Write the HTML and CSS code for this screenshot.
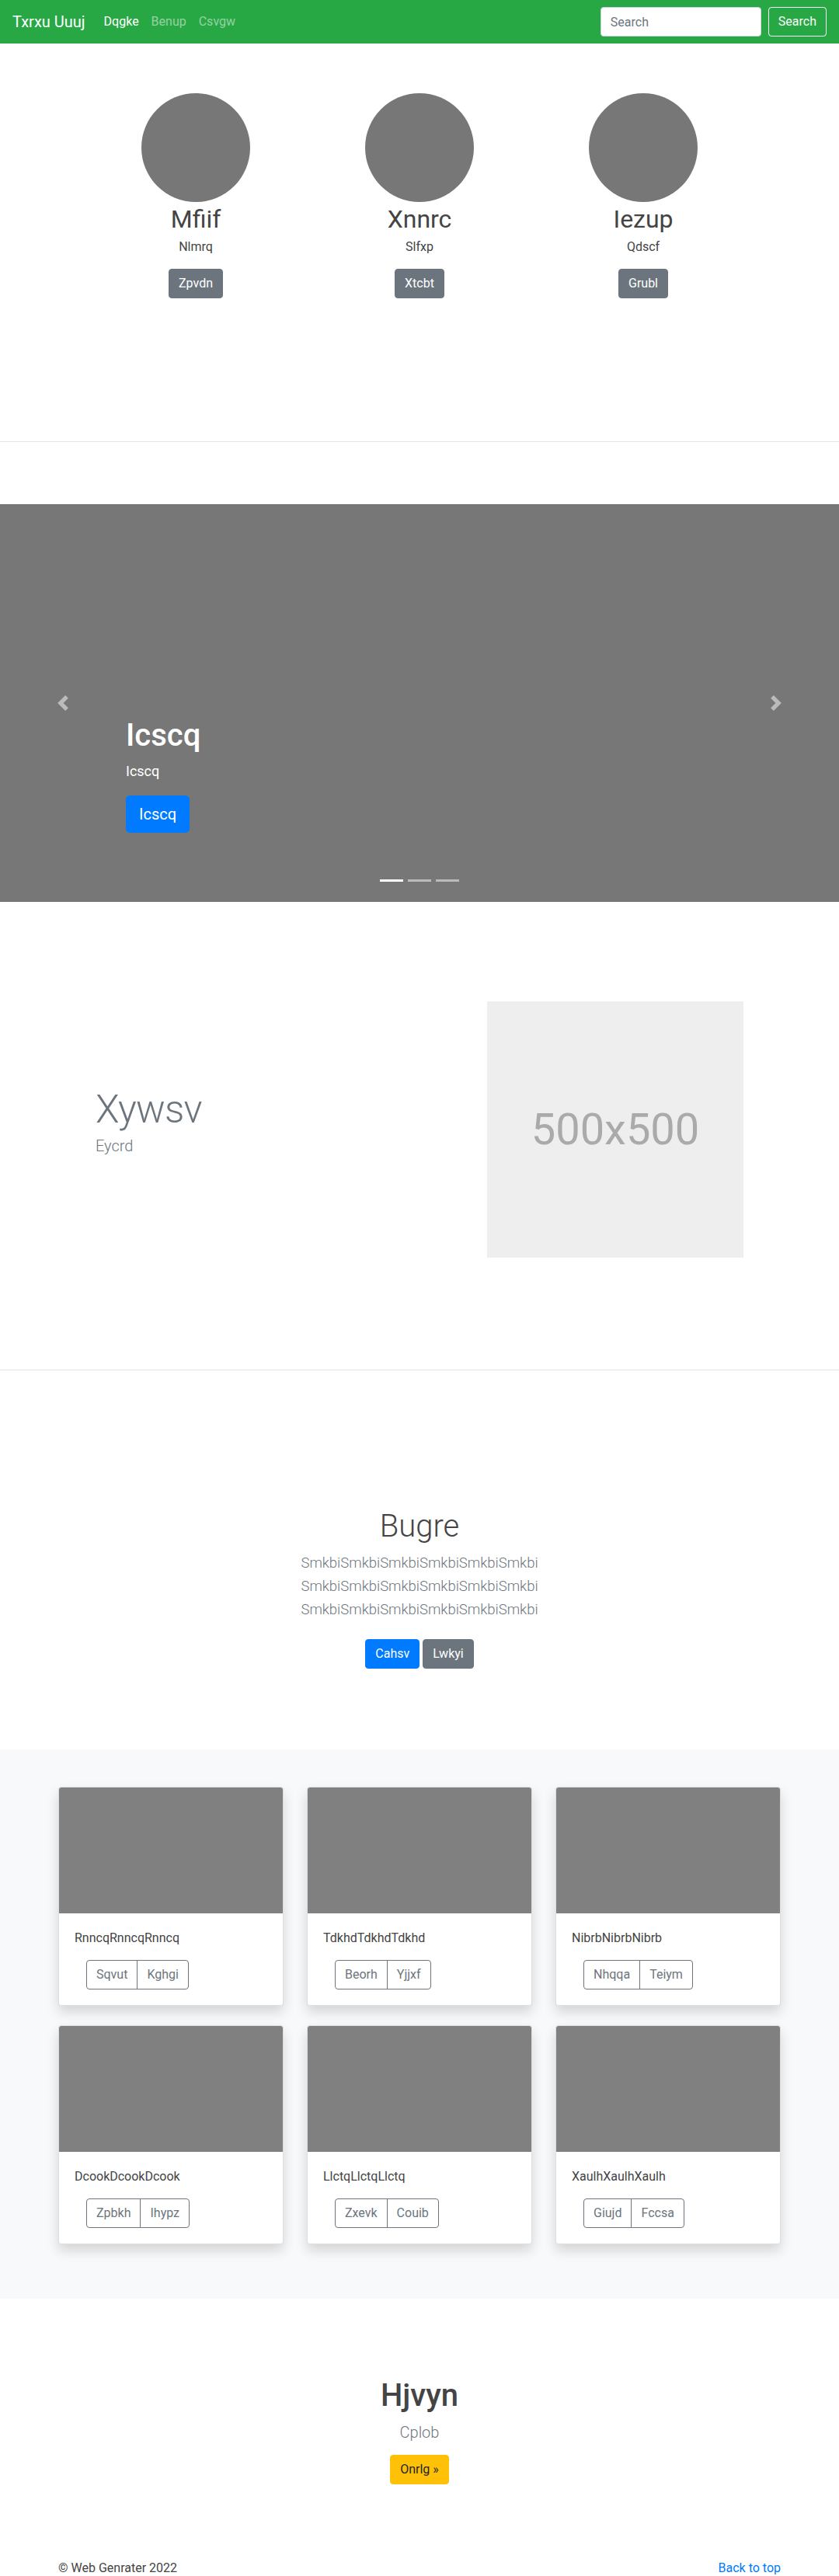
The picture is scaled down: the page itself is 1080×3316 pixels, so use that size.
FILE: index.html
```html
<!DOCTYPE html>
<html lang="en">
<head>
<meta charset="utf-8">
<title>Txrxu Uuuj</title>
<link rel="stylesheet" href="styles.css">
</head>
<body>
<nav class="navbar">
  <a class="brand" href="#">Txrxu Uuuj</a>
  <ul class="nav-links">
    <li><a class="nav-link active" href="#">Dqgke</a></li>
    <li><a class="nav-link" href="#">Benup</a></li>
    <li><a class="nav-link" href="#">Csvgw</a></li>
  </ul>
  <form class="search">
    <input class="search-input" type="text" placeholder="Search">
    <button class="btn btn-outline-light" type="button">Search</button>
  </form>
</nav>

<section class="team">
  <div class="narrow row3">
    <div class="member">
      <div class="avatar"></div>
      <h2 class="member-name">Mfiif</h2>
      <p class="member-role">Nlmrq</p>
      <a class="btn btn-secondary" href="#">Zpvdn</a>
    </div>
    <div class="member">
      <div class="avatar"></div>
      <h2 class="member-name">Xnnrc</h2>
      <p class="member-role">Slfxp</p>
      <a class="btn btn-secondary" href="#">Xtcbt</a>
    </div>
    <div class="member">
      <div class="avatar"></div>
      <h2 class="member-name">Iezup</h2>
      <p class="member-role">Qdscf</p>
      <a class="btn btn-secondary" href="#">Grubl</a>
    </div>
  </div>
</section>

<hr class="divider divider-top">

<div class="carousel">
  <a class="carousel-control prev" href="#">
    <svg width="20" height="20" viewBox="0 0 8 8"><path fill="#fff" d="M5.25 0l-4 4 4 4 1.5-1.5L4.25 4l2.5-2.5L5.25 0z"/></svg>
  </a>
  <div class="carousel-caption">
    <h1 class="caption-title">Icscq</h1>
    <p class="caption-text">Icscq</p>
    <a class="btn btn-lg btn-primary" href="#">Icscq</a>
  </div>
  <a class="carousel-control next" href="#">
    <svg width="20" height="20" viewBox="0 0 8 8"><path fill="#fff" d="M2.75 0l-1.5 1.5L3.75 4l-2.5 2.5L2.75 8l4-4-4-4z"/></svg>
  </a>
  <ol class="indicators">
    <li class="active"></li>
    <li></li>
    <li></li>
  </ol>
</div>

<section class="featurette">
  <div class="narrow feat-row">
    <div class="feat-text">
      <h2 class="feat-heading">Xywsv</h2>
      <p class="lead muted">Eycrd</p>
    </div>
    <div class="feat-media">
      <div class="placeholder">500x500</div>
    </div>
  </div>
</section>

<hr class="divider divider-mid">

<section class="jumbo">
  <h1 class="jumbo-heading">Bugre</h1>
  <p class="lead muted jumbo-lead">SmkbiSmkbiSmkbiSmkbiSmkbiSmkbi SmkbiSmkbiSmkbiSmkbiSmkbiSmkbi SmkbiSmkbiSmkbiSmkbiSmkbiSmkbi</p>
  <p class="jumbo-actions">
    <a class="btn btn-primary" href="#">Cahsv</a>
    <a class="btn btn-secondary" href="#">Lwkyi</a>
  </p>
</section>

<section class="album">
  <div class="container card-grid">
    <div class="card">
      <div class="card-img"></div>
      <div class="card-body">
        <p class="card-text">RnncqRnncqRnncq</p>
        <div class="btn-group"><button class="btn btn-outline-secondary">Sqvut</button><button class="btn btn-outline-secondary">Kghgi</button></div>
      </div>
    </div>
    <div class="card">
      <div class="card-img"></div>
      <div class="card-body">
        <p class="card-text">TdkhdTdkhdTdkhd</p>
        <div class="btn-group"><button class="btn btn-outline-secondary">Beorh</button><button class="btn btn-outline-secondary">Yjjxf</button></div>
      </div>
    </div>
    <div class="card">
      <div class="card-img"></div>
      <div class="card-body">
        <p class="card-text">NibrbNibrbNibrb</p>
        <div class="btn-group"><button class="btn btn-outline-secondary">Nhqqa</button><button class="btn btn-outline-secondary">Teiym</button></div>
      </div>
    </div>
    <div class="card">
      <div class="card-img"></div>
      <div class="card-body">
        <p class="card-text">DcookDcookDcook</p>
        <div class="btn-group"><button class="btn btn-outline-secondary">Zpbkh</button><button class="btn btn-outline-secondary">Ihypz</button></div>
      </div>
    </div>
    <div class="card">
      <div class="card-img"></div>
      <div class="card-body">
        <p class="card-text">LlctqLlctqLlctq</p>
        <div class="btn-group"><button class="btn btn-outline-secondary">Zxevk</button><button class="btn btn-outline-secondary">Couib</button></div>
      </div>
    </div>
    <div class="card">
      <div class="card-img"></div>
      <div class="card-body">
        <p class="card-text">XaulhXaulhXaulh</p>
        <div class="btn-group"><button class="btn btn-outline-secondary">Giujd</button><button class="btn btn-outline-secondary">Fccsa</button></div>
      </div>
    </div>
  </div>
</section>

<section class="cta">
  <h1 class="cta-heading">Hjvyn</h1>
  <p class="lead muted cta-lead">Cplob</p>
  <a class="btn btn-warning" href="#">Onrlg &raquo;</a>
</section>

<footer class="footer">
  <div class="container footer-row">
    <p class="footer-copy">&copy; Web Genrater 2022</p>
    <p class="footer-top"><a href="#">Back to top</a></p>
  </div>
</footer>
</body>
</html>
```

FILE: styles.css
```css
* { box-sizing: border-box; }

html, body {
  margin: 0;
  padding: 0;
}

body {
  font-family: Roboto, "Open Sans", "Liberation Sans", sans-serif;
  font-size: 16px;
  line-height: 1.5;
  color: #444;
  background: #fff;
}

a { text-decoration: none; }

p { margin: 0 0 16px; }

h1, h2 { margin: 0 0 8px; line-height: 1.2; }

.container {
  width: 960px;
  margin: 0 auto;
  padding: 0 15px;
}

.narrow {
  width: 864px;
  margin: 0 auto;
}

/* ---------- Buttons ---------- */
.btn {
  display: inline-block;
  font-family: inherit;
  font-size: 16px;
  line-height: 24px;
  font-weight: 400;
  padding: 6px 12px;
  border: 1px solid transparent;
  border-radius: 4px;
  text-align: center;
  vertical-align: middle;
  cursor: pointer;
  background: transparent;
}

.btn-lg {
  font-size: 20px;
  line-height: 30px;
  padding: 8px 16px;
  border-radius: 5px;
}

.btn-primary { background: #007bff; border-color: #007bff; color: #fff; }
.btn-secondary { background: #6c757d; border-color: #6c757d; color: #fff; }
.btn-warning { background: #ffc107; border-color: #ffc107; color: #212529; }
.btn-outline-light { border-color: #f8f9fa; color: #f8f9fa; }
.btn-outline-secondary { border-color: #6c757d; color: #6c757d; background: transparent; }

/* ---------- Navbar ---------- */
.navbar {
  height: 56px;
  background: #28a745;
  display: flex;
  align-items: center;
  padding: 8px 16px;
}

.brand {
  font-size: 20px;
  line-height: 30px;
  padding: 5px 0;
  margin-right: 16px;
  color: #fff;
}

.nav-links {
  display: flex;
  list-style: none;
  margin: 0;
  padding: 0;
  flex: 1;
}

.nav-link {
  display: block;
  padding: 8px;
  color: rgba(255, 255, 255, 0.5);
}

.nav-link.active { color: #fff; }

.search {
  display: flex;
  align-items: center;
}

.search-input {
  width: 207px;
  height: 38px;
  margin-right: 9px;
  padding: 6px 12px;
  font-family: inherit;
  font-size: 16px;
  color: #495057;
  border: 1px solid #ced4da;
  border-radius: 4px;
  background: #fff;
}

.search-input::placeholder { color: #6c757d; }

/* ---------- Team ---------- */
.team {
  padding: 64px 0 184px;
}

.row3 {
  display: grid;
  grid-template-columns: repeat(3, 1fr);
}

.member {
  text-align: center;
}

.avatar {
  width: 140px;
  height: 140px;
  border-radius: 50%;
  background: #777;
  margin: 0 auto 3px;
}

.member-name {
  font-size: 32px;
  font-weight: 400;
  margin-bottom: 5px;
}

.member-role { margin-bottom: 16px; }

/* ---------- Dividers ---------- */
.divider {
  border: 0;
  border-top: 1px solid rgba(0, 0, 0, 0.1);
  margin: 0;
}

.divider-top { margin-bottom: 80px; }

/* ---------- Carousel ---------- */
.carousel {
  position: relative;
  height: 512px;
  background: #777;
}

.carousel-control {
  position: absolute;
  top: 0;
  bottom: 0;
  width: 15%;
  display: flex;
  align-items: center;
  justify-content: center;
  opacity: 0.5;
}

.carousel-control.prev { left: 0; }
.carousel-control.next { right: 0; }

.carousel-caption {
  position: absolute;
  left: 15%;
  right: 15%;
  bottom: 69px;
  padding: 20px 0;
  color: #fff;
}

.caption-title {
  font-size: 40px;
  font-weight: 500;
  margin-bottom: 8px;
}

.caption-text {
  font-size: 18px;
  line-height: 27px;
  margin-bottom: 18px;
}

.indicators {
  position: absolute;
  left: 0;
  right: 0;
  bottom: 26px;
  margin: 0;
  padding: 0;
  list-style: none;
  display: flex;
  justify-content: center;
  gap: 6px;
}

.indicators li {
  width: 30px;
  height: 3px;
  background: rgba(255, 255, 255, 0.5);
}

.indicators li.active { background: #fff; }

/* ---------- Featurette ---------- */
.featurette {
  padding-top: 128px;
}

.feat-row {
  display: grid;
  grid-template-columns: 7fr 5fr;
  align-items: center;
}

.feat-text { padding: 0 15px; }
.feat-media { padding: 0 15px; }

.feat-heading {
  font-size: 50px;
  font-weight: 300;
  line-height: 1;
  letter-spacing: -0.8px;
  color: #6c757d;
  margin-bottom: 7px;
}

.lead {
  font-size: 20px;
  line-height: 30px;
  font-weight: 300;
}

.muted { color: #6c757d; }

.placeholder {
  width: 330px;
  height: 330px;
  background: #eee;
  color: #aaa;
  font-size: 56px;
  display: flex;
  align-items: center;
  justify-content: center;
}

.divider-mid { margin-top: 144px; }

/* ---------- Jumbotron ---------- */
.jumbo {
  padding: 177px 0 104px;
  text-align: center;
}

.jumbo-heading {
  font-size: 40px;
  font-weight: 300;
  margin-bottom: 8px;
}

.jumbo-lead {
  width: 450px;
  font-size: 18.5px;
  margin: 0 auto 23px;
}

.jumbo-actions { margin: 0; }

/* ---------- Album ---------- */
.album {
  background: #f8f9fa;
  padding: 48px 0 46px;
}

.card-grid {
  display: grid;
  grid-template-columns: repeat(3, 1fr);
  column-gap: 30px;
  row-gap: 25px;
  margin-bottom: 24px;
}

.card {
  background: #fff;
  border: 1px solid rgba(0, 0, 0, 0.125);
  border-radius: 4px;
  overflow: hidden;
  box-shadow: 0 8px 16px rgba(0, 0, 0, 0.15);
}

.card-img {
  height: 162px;
  background: #808080;
}

.card-body {
  padding: 20px;
}

.card-text { margin-bottom: 16px; }

.btn-group {
  display: inline-flex;
  margin-left: 15px;
}

.btn-group .btn {
  border-radius: 0;
}

.btn-group .btn:first-child {
  border-radius: 4px 0 0 4px;
}

.btn-group .btn + .btn {
  margin-left: -1px;
  border-radius: 0 4px 4px 0;
}

/* ---------- CTA ---------- */
.cta {
  padding: 101px 0 48px;
  text-align: center;
}

.cta-heading {
  font-size: 40px;
  font-weight: 500;
  margin-bottom: 8px;
}

.cta-lead { margin-bottom: 14px; }

/* ---------- Footer ---------- */
.footer {
  padding: 48px 0;
}

.footer-row {
  display: flex;
  justify-content: space-between;
}

.footer-copy, .footer-top { margin: 0; }

.footer-top a { color: #007bff; }
```
